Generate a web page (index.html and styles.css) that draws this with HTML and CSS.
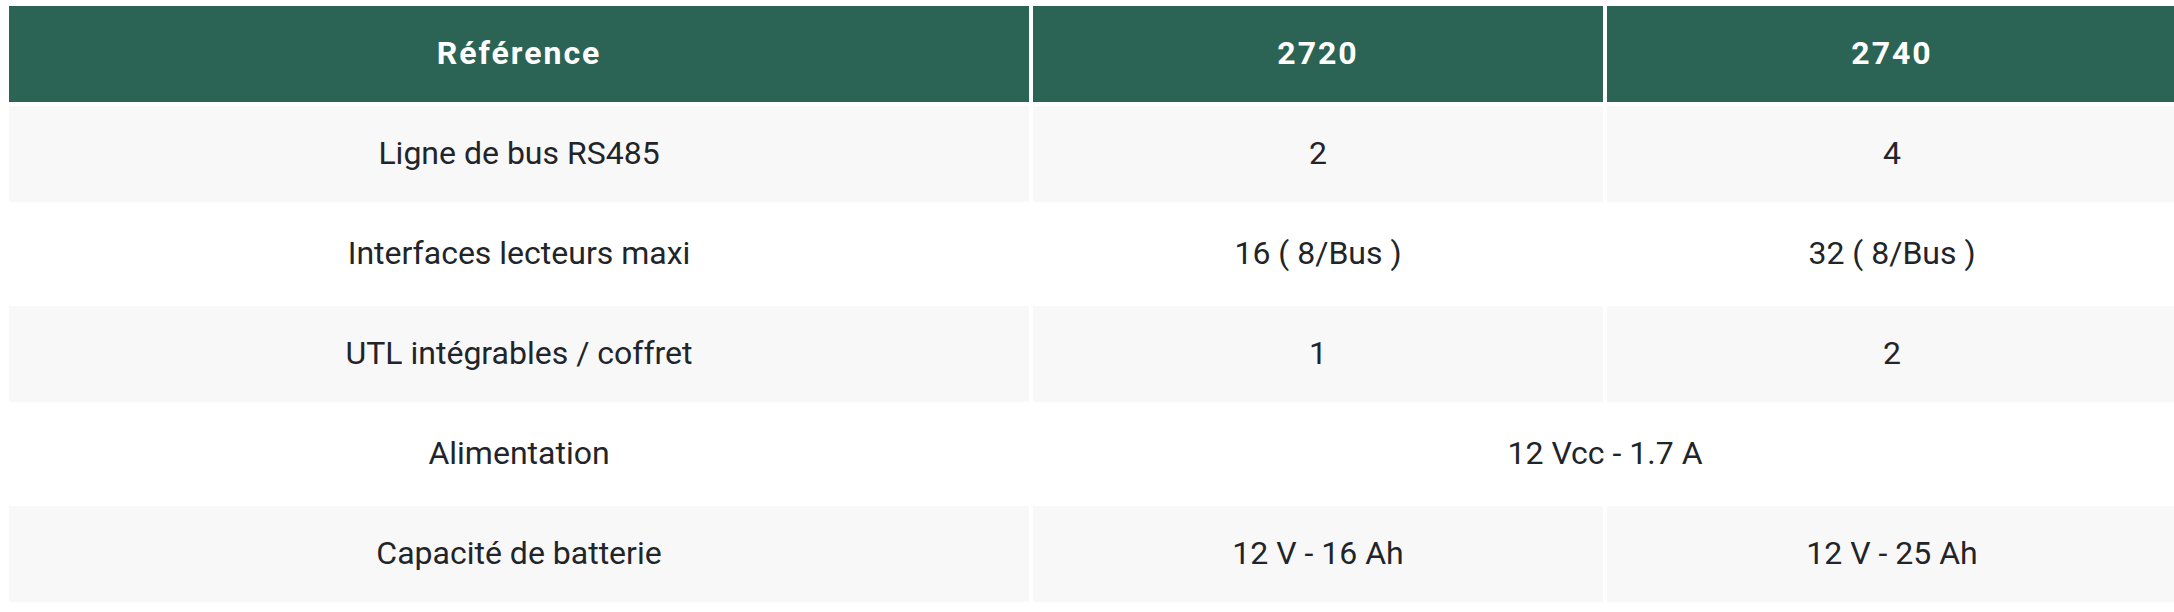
FILE: index.html
```html
<!DOCTYPE html>
<html lang="fr">
<head>
<meta charset="utf-8">
<title>Comparatif</title>
<link rel="stylesheet" href="styles.css">
</head>
<body>
<div class="wrap">
<table class="spec">
<colgroup><col class="c1"><col class="c2"><col class="c3"></colgroup>
<thead>
<tr><th>Référence</th><th>2720</th><th>2740</th></tr>
</thead>
<tbody>
<tr class="odd"><td>Ligne de bus RS485</td><td>2</td><td>4</td></tr>
<tr><td>Interfaces lecteurs maxi</td><td>16 ( 8/Bus )</td><td>32 ( 8/Bus )</td></tr>
<tr class="odd"><td>UTL intégrables / coffret</td><td>1</td><td>2</td></tr>
<tr><td>Alimentation</td><td colspan="2">12 Vcc - 1.7 A</td></tr>
<tr class="odd"><td>Capacité de batterie</td><td>12 V - 16 Ah</td><td>12 V - 25 Ah</td></tr>
</tbody>
</table>
</div>
</body>
</html>
```
FILE: styles.css
```css
html, body {
  margin: 0;
  padding: 0;
  overflow: hidden;
  background: #ffffff;
}
.wrap {
  padding: 2px 0 0 5px;
}
.spec {
  border-collapse: separate;
  border-spacing: 4px;
  table-layout: fixed;
  width: 2176px;
  font-family: Roboto, "Liberation Sans", sans-serif;
  color: #212529;
}
.c1 { width: 1020px; }
.c2 { width: 570px; }
.c3 { width: 570px; }
.spec th,
.spec td {
  height: 93px;
  padding: 0 0 3px 0;
  text-align: center;
  vertical-align: middle;
}
.spec th {
  background: #2b6354;
  color: #ffffff;
  font-weight: 700;
  font-size: 32px;
  letter-spacing: 2px;
}
.spec td {
  font-size: 32px;
  font-weight: 400;
}
.spec tr.odd td {
  background: #f9f8f9;
}
```
